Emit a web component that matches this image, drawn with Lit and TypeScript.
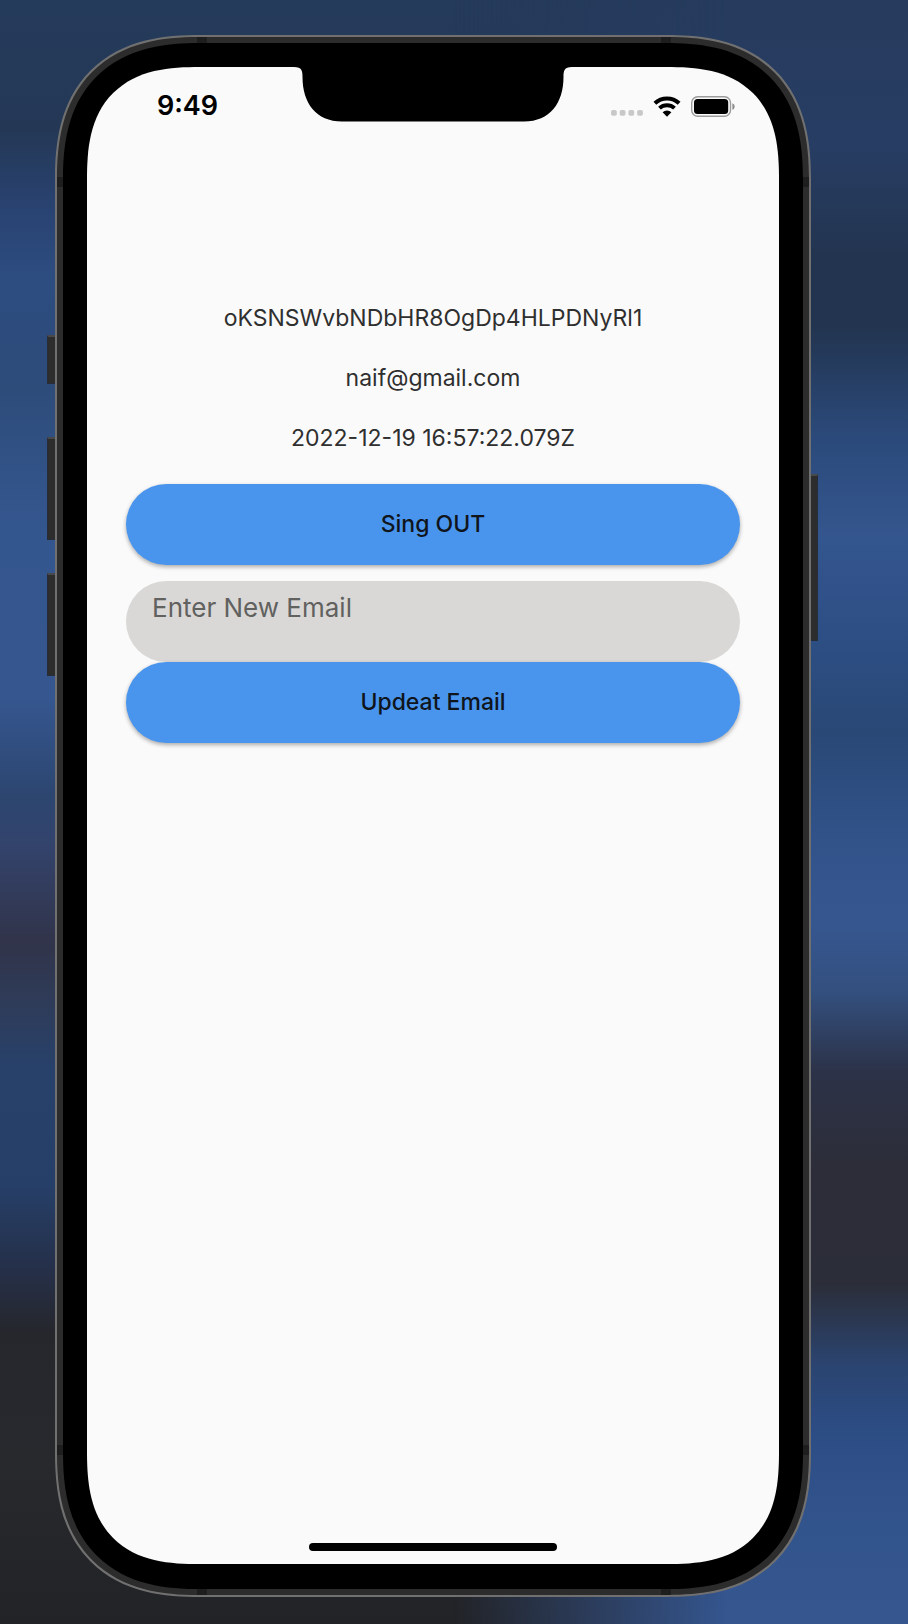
import { LitElement, html, css } from "lit";
import { customElement, property, state } from "lit/decorators.js";

@customElement("status-bar")
export class StatusBar extends LitElement {
  @property() time = "";

  static styles = css`
    :host {
      display: grid;
      grid-template-columns: 1fr 278px 1fr;
      align-items: start;
      height: 80px;
    }
    .side {
      display: flex;
      align-items: center;
      justify-content: center;
      height: 78px;
      padding-right: 6px;
    }
    .time {
      font-size: 27px;
      line-height: 32px;
      font-weight: 600;
      color: #000;
    }
    .icons {
      gap: 10px;
    }
    .dots {
      padding-top: 14px;
    }
    svg {
      display: block;
      flex: none;
    }
  `;

  render() {
    return html`
      <div class="side time">${this.time}</div>
      <svg width="278" height="55" viewBox="0 0 278 55" aria-hidden="true">
        <path
          d="M0 0H278C270 0 269.500 4 269.500 10C269.500 36 256 54.500 230 54.500H48C22 54.500 8.500 36 8.500 10C8.500 4 8 0 0 0Z"
          fill="#000"
        />
      </svg>
      <div class="side icons">
        <svg class="dots" width="32" height="6" viewBox="0 0 32 6" aria-hidden="true">
          <g fill="#c8c8c8">
            <rect x="0" y="0" width="5.800" height="5.800" rx="1.800" />
            <rect x="8.700" y="0" width="5.800" height="5.800" rx="1.800" />
            <rect x="17.400" y="0" width="5.800" height="5.800" rx="1.800" />
            <rect x="26.100" y="0" width="5.800" height="5.800" rx="1.800" />
          </g>
        </svg>
        <svg width="28" height="21" viewBox="0 0 28 21" aria-hidden="true">
          <g fill="none" stroke="#000" stroke-width="4">
            <path d="M1.900 7.300A17.400 17.400 0 0 1 26.100 7.300" />
            <path d="M6.500 12.100A11 11 0 0 1 21.500 12.100" />
          </g>
          <path d="M14 20.800L9.600 16.300A6.200 6.200 0 0 1 18.400 16.300Z" fill="#000" />
        </svg>
        <svg width="44" height="21" viewBox="0 0 44 21" aria-hidden="true">
          <rect x="0.700" y="0.700" width="38.800" height="19.600" rx="6" fill="none" stroke="#9c9c9c" stroke-width="1.400" />
          <rect x="3" y="3" width="34.200" height="15" rx="3.500" fill="#000" />
          <path d="M41.400 7.200Q43.700 8 43.700 10.500T41.400 13.800Z" fill="#8c8c8c" />
        </svg>
      </div>
    `;
  }
}

@customElement("account-form")
export class AccountForm extends LitElement {
  @property() uid = "";
  @property() email = "";
  @property() created = "";
  @state() private draft = "";

  static styles = css`
    :host {
      display: flex;
      flex-direction: column;
      padding: 0 39px;
    }
    .details {
      display: flex;
      flex-direction: column;
      gap: 32px;
      padding-bottom: 32px;
      text-align: center;
      font-size: 23px;
      line-height: 28px;
      color: #2f2f2f;
    }
    .details p {
      margin: 0;
    }
    .field,
    .action {
      box-sizing: border-box;
      width: 100%;
      height: 81px;
      border: 0;
      border-radius: 41px;
      font-family: inherit;
    }
    .action {
      background: #4995ee;
      color: #10151c;
      font-size: 23px;
      line-height: 28px;
      font-weight: 500;
      padding-bottom: 2px;
      box-shadow: 0 2px 4px rgba(0, 0, 0, 0.32);
    }
    .field {
      margin-top: 16px;
      padding: 0 26px 28px;
      background: #d9d8d6;
      color: #2b2b2b;
      font-size: 26px;
      outline: none;
    }
    .field::placeholder {
      color: #616160;
      opacity: 1;
    }
  `;

  render() {
    return html`
      <div class="details">
        <p>${this.uid}</p>
        <p>${this.email}</p>
        <p>${this.created}</p>
      </div>
      <button class="action" type="button">Sing OUT</button>
      <input
        class="field"
        type="email"
        placeholder="Enter New Email"
        aria-label="Enter New Email"
        .value=${this.draft}
        @input=${(e: Event) => (this.draft = (e.target as HTMLInputElement).value)}
      />
      <button class="action" type="button">Updeat Email</button>
    `;
  }
}

@customElement("app-root")
export class AppRoot extends LitElement {
  static styles = css`
    :host {
      display: block;
      font-family: Inter, "Liberation Sans", sans-serif;
    }
    .desk {
      box-sizing: border-box;
      min-height: 100vh;
      display: grid;
      grid-template-columns: 8px minmax(0, 1fr) 8px;
      padding: 35px 89px 27px 47px;
      position: relative;
      isolation: isolate;
      background: linear-gradient(
        180deg,
        #253b5b 0%,
        #243856 8%,
        #294372 13%,
        #2d4c80 17%,
        #2d4c7a 24%,
        #34568e 32%,
        #35568f 43%,
        #2c4670 49%,
        #33436c 52%,
        #31344a 58%,
        #2e3c5a 62%,
        #27416b 66%,
        #263f68 73%,
        #25304a 78%,
        #26272d 82%,
        #28292d 90%,
        #222327 100%
      );
    }
    .desk::before {
      content: "";
      position: absolute;
      inset: 0;
      z-index: -1;
      background: linear-gradient(
        180deg,
        #263b5d 0%,
        #273d63 9%,
        #22344f 16%,
        #22344f 20%,
        #2b4a7b 27%,
        #34568e 33%,
        #2e5087 38%,
        #294876 45%,
        #31538a 52%,
        #36568f 57%,
        #33507f 61%,
        #2c3248 66%,
        #2c2d38 72%,
        #2b2d38 79%,
        #2b4470 84%,
        #2c4c84 88%,
        #32548c 94%,
        #35568f 100%
      );
      mask-image: linear-gradient(to right, transparent 50%, #000 80%);
    }
    .rail {
      display: flex;
      flex-direction: column;
    }
    .left {
      gap: 33px;
      padding-top: 300px;
    }
    .right {
      padding-top: 439px;
    }
    .key {
      box-sizing: border-box;
      height: 103px;
      background: #2d2d2d;
      border: 1px solid #262c38;
      border-top: 2px solid #48494b;
    }
    .left .key {
      border-right: 0;
    }
    .right .key {
      height: 167px;
      margin-right: 1px;
      border-left: 0;
    }
    .left .mute {
      height: 49px;
      margin-bottom: 20px;
    }
    .case {
      display: flex;
      padding: 6px;
      border: 2px solid #707070;
      border-radius: 118px;
      background:
        linear-gradient(#1e1e1e, #1e1e1e) 0 140px / 100% 10px no-repeat,
        linear-gradient(#1e1e1e, #1e1e1e) 0 calc(100% - 140px) / 100% 10px no-repeat,
        linear-gradient(#1e1e1e, #1e1e1e) 140px 0 / 10px 100% no-repeat,
        linear-gradient(#1e1e1e, #1e1e1e) calc(100% - 138px) 0 / 10px 100% no-repeat,
        #2c2c2c;
    }
    .bezel {
      flex: 1;
      display: flex;
      padding: 24px 24px 25px;
      border-radius: 110px;
      background: #000;
    }
    .screen {
      flex: 1;
      display: flex;
      flex-direction: column;
      border-radius: 88px;
      background: #fafafa;
      overflow: hidden;
    }
    @supports (corner-shape: superellipse(1.3)) {
      .case,
      .bezel {
        corner-shape: superellipse(1.3);
      }
      .case {
        border-radius: 145px;
      }
      .bezel {
        border-radius: 137px;
      }
      .screen {
        border-radius: 113px;
        corner-shape: superellipse(1.4);
      }
    }
    .content {
      flex: 1;
      padding-top: 157px;
    }
    .home {
      align-self: center;
      width: 248px;
      height: 8px;
      margin-bottom: 13px;
      border-radius: 4px;
      background: #000;
    }
  `;

  render() {
    return html`
      <div class="desk">
        <div class="rail left">
          <div class="key mute"></div>
          <div class="key"></div>
          <div class="key"></div>
        </div>
        <div class="case">
          <div class="bezel">
            <main class="screen">
              <status-bar time="9:49"></status-bar>
              <account-form
                class="content"
                uid="oKSNSWvbNDbHR8OgDp4HLPDNyRl1"
                email="naif@gmail.com"
                created="2022-12-19 16:57:22.079Z"
              ></account-form>
              <div class="home"></div>
            </main>
          </div>
        </div>
        <div class="rail right">
          <div class="key"></div>
        </div>
      </div>
    `;
  }
}
